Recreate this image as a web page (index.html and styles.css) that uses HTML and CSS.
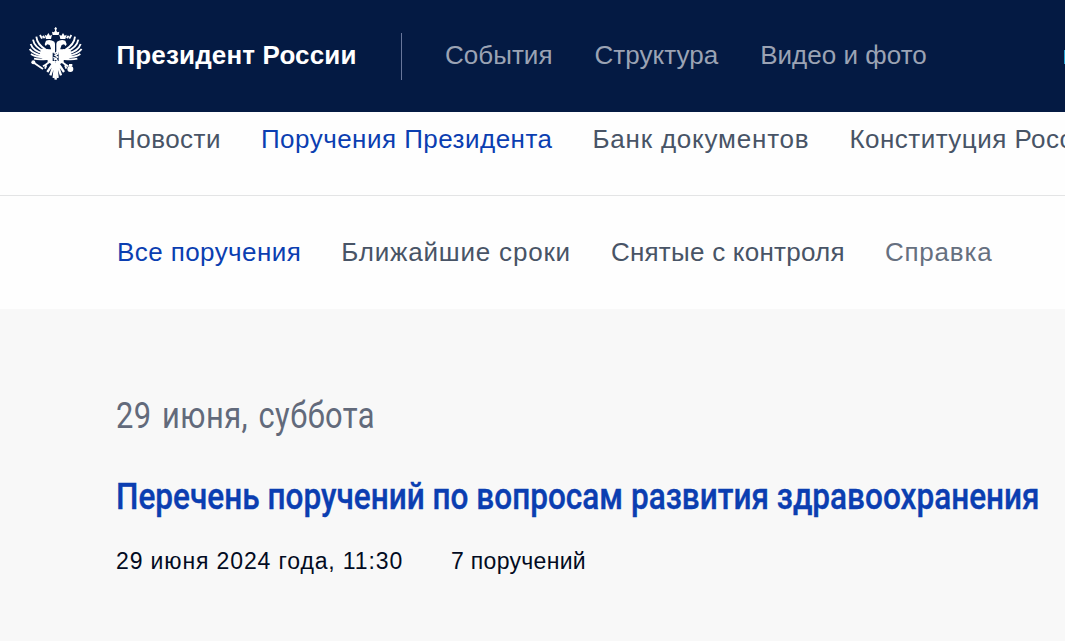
FILE: index.html
```html
<!DOCTYPE html>
<html lang="ru">
<head>
    <meta charset="UTF-8">
    <meta name="viewport" content="width=device-width, initial-scale=1.0">
    <title>Поручения Президента</title>
    <link rel="stylesheet" href="styles.css">
</head>
<body>
    <header class="header">
        <a class="logo" href="#">
            <svg class="eagle" viewBox="28 20 162 160" aria-hidden="true">
                <g id="half">
                    <!-- Wing -->
                    <path class="fill" d="M64 84L86 86V118H72L60 106Z"/>
                    <g class="feathers">
                        <path d="M50 48Q52 72 80 88"/>
                        <path d="M40 57Q44 80 76 94"/>
                        <path d="M33 70Q40 91 72 99"/>
                        <path d="M30 85Q42 101 72 105"/>
                        <path d="M34 100Q48 110 76 110"/>
                        <path d="M43 114Q58 118 82 115"/>
                    </g>
                    <!-- Head, neck and crown -->
                    <path class="fill" d="M75 71L79 60Q92 55 104 63L106 69V96H94V84L90 73L83 71L78 76Z"/>
                    <path class="fill" d="M79 55L75 42L81 45L86 37L91 45L97 42L94 55Z"/>
                    <path class="feathers" d="M61 43L67 54M69 46L75 52"/>
                    <!-- Body, leg and tail -->
                    <path class="fill" d="M82 86H99V121H108V131H96L84 124Z"/>
                    <path class="feathers" d="M92 122L77 133M78 132L70 137M80 134L76 144"/>
                    <path class="tail" d="M102 126L83 154M104 128L92 164M107 128L102 172"/>
                </g>
                <use href="#half" transform="matrix(-1 0 0 1 216 0)"/>
                <path class="fill" d="M99 43L97 33L103 35L106 30V26H104V23H106V20H110V23H112V26H110V30L113 35L119 33L117 43Z"/>
                <path class="tail" d="M108 128V177"/>
                <!-- Shield rider -->
                <path class="rider" d="M102 96L107 98L112 94L115 99L106 104L114 109L108 114L101 110M103 119L108 114L114 120"/>
                <!-- Sceptre and orb -->
                <path class="sceptre" d="M39 124L70 145"/>
                <circle class="fill" cx="41" cy="125" r="6"/>
                <circle class="fill" cx="152" cy="145" r="9"/>
                <path class="feathers" d="M153 130V138M148 133H158"/>
            </svg>
            <span class="logo-text">Президент России</span>
        </a>
        <nav class="menu">
            <a href="#">События</a>
            <a href="#">Структура</a>
            <a href="#">Видео и фото</a>
        </nav>
        <span class="lang"></span>
    </header>

    <nav class="sections">
        <a href="#">Новости</a>
        <a class="active" href="#">Поручения Президента</a>
        <a class="loose" href="#">Банк документов</a>
        <a href="#">Конституция России</a>
    </nav>

    <nav class="filters">
        <a class="active" href="#">Все поручения</a>
        <a class="loose" href="#">Ближайшие сроки</a>
        <a class="tight" href="#">Снятые с контроля</a>
        <a class="help loose" href="#">Справка</a>
    </nav>

    <main class="content">
        <h2 class="date"><span class="narrow">29 июня, суббота</span></h2>
        <h3 class="title"><a class="narrow" href="#">Перечень поручений по вопросам развития здравоохранения</a></h3>
        <p class="info">
            <time>29 июня 2024 года, 11:30</time>
            <span>7 поручений</span>
        </p>
    </main>
</body>
</html>
```
FILE: styles.css
```css
* {
    box-sizing: border-box;
}

body {
    margin: 0;
    height: 641px;
    overflow: hidden;
    display: flex;
    flex-direction: column;
    background: #fefefe;
    color: #020b22;
    font-family: "Liberation Sans", Arial, sans-serif;
    font-size: 26px;
    line-height: 32px;
    white-space: nowrap;
}

a {
    color: inherit;
    text-decoration: none;
}

/* Header */
.header {
    display: flex;
    align-items: center;
    height: 112px;
    padding-left: 29px;
    background: #041a43;
}

.logo {
    display: flex;
    align-items: center;
    width: 372px;
    color: #fff;
}

.eagle {
    width: 54px;
    height: 54px;
    margin: 0 33.5px 4px 0;
}

.fill {
    fill: #fff;
}

.feathers,
.tail,
.rider,
.sceptre {
    fill: none;
    stroke: #fff;
    stroke-width: 5.5;
}

.tail {
    stroke-width: 7;
}

.rider {
    stroke-width: 4;
}

.logo-text {
    font-weight: bold;
    letter-spacing: 0.15px;
    padding-bottom: 3px;
}

.menu {
    display: flex;
    align-items: center;
    gap: 42px;
    height: 47px;
    padding: 0 0 3px 43px;
    border-left: 1px solid #68769a;
    color: #9ba3b4;
    letter-spacing: 0.03px;
}

.lang {
    width: 1px;
    height: 14px;
    margin: 2px 0 0 auto;
    background: #27a4d4;
}

/* Section links */
.sections,
.filters {
    display: flex;
    gap: 40px;
    padding-left: 117px;
    color: #485466;
    letter-spacing: 0.47px;
}

.loose {
    letter-spacing: 0.8px;
}

.tight {
    letter-spacing: 0.25px;
}

.sections {
    height: 84px;
    padding-top: 11px;
    border-bottom: 1px solid #e3e4e5;
}

.filters {
    height: 113px;
    padding-top: 40px;
    letter-spacing: 0.42px;
}

.active {
    color: #0b3eb1;
}

.help {
    color: #667080;
}

/* Orders list */
.content {
    flex: 1;
    padding: 85px 0 0 116px;
    background: #f8f8f8;
}

.narrow {
    display: inline-block;
    font-family: Roboto, sans-serif;
    transform-origin: 0 50%;
}

.date {
    margin: 0 0 37px;
    font-size: 37px;
    font-weight: normal;
    line-height: 44px;
    color: #626a7b;
}

.date .narrow {
    transform: scaleX(0.834);
    letter-spacing: 0.5px;
    word-spacing: 3px;
}

.title {
    margin: 0 0 27px;
    font-size: 37px;
    font-weight: 500;
    line-height: 44px;
    color: #0b3eb1;
}

.title .narrow {
    transform: scaleX(0.853);
    -webkit-text-stroke: 0.4px #0b3eb1;
}

.info {
    display: flex;
    gap: 48px;
    margin: 0;
    font-size: 23px;
    line-height: 30px;
}

.info time {
    letter-spacing: 0.87px;
}

.info span {
    letter-spacing: 0.3px;
}
```
